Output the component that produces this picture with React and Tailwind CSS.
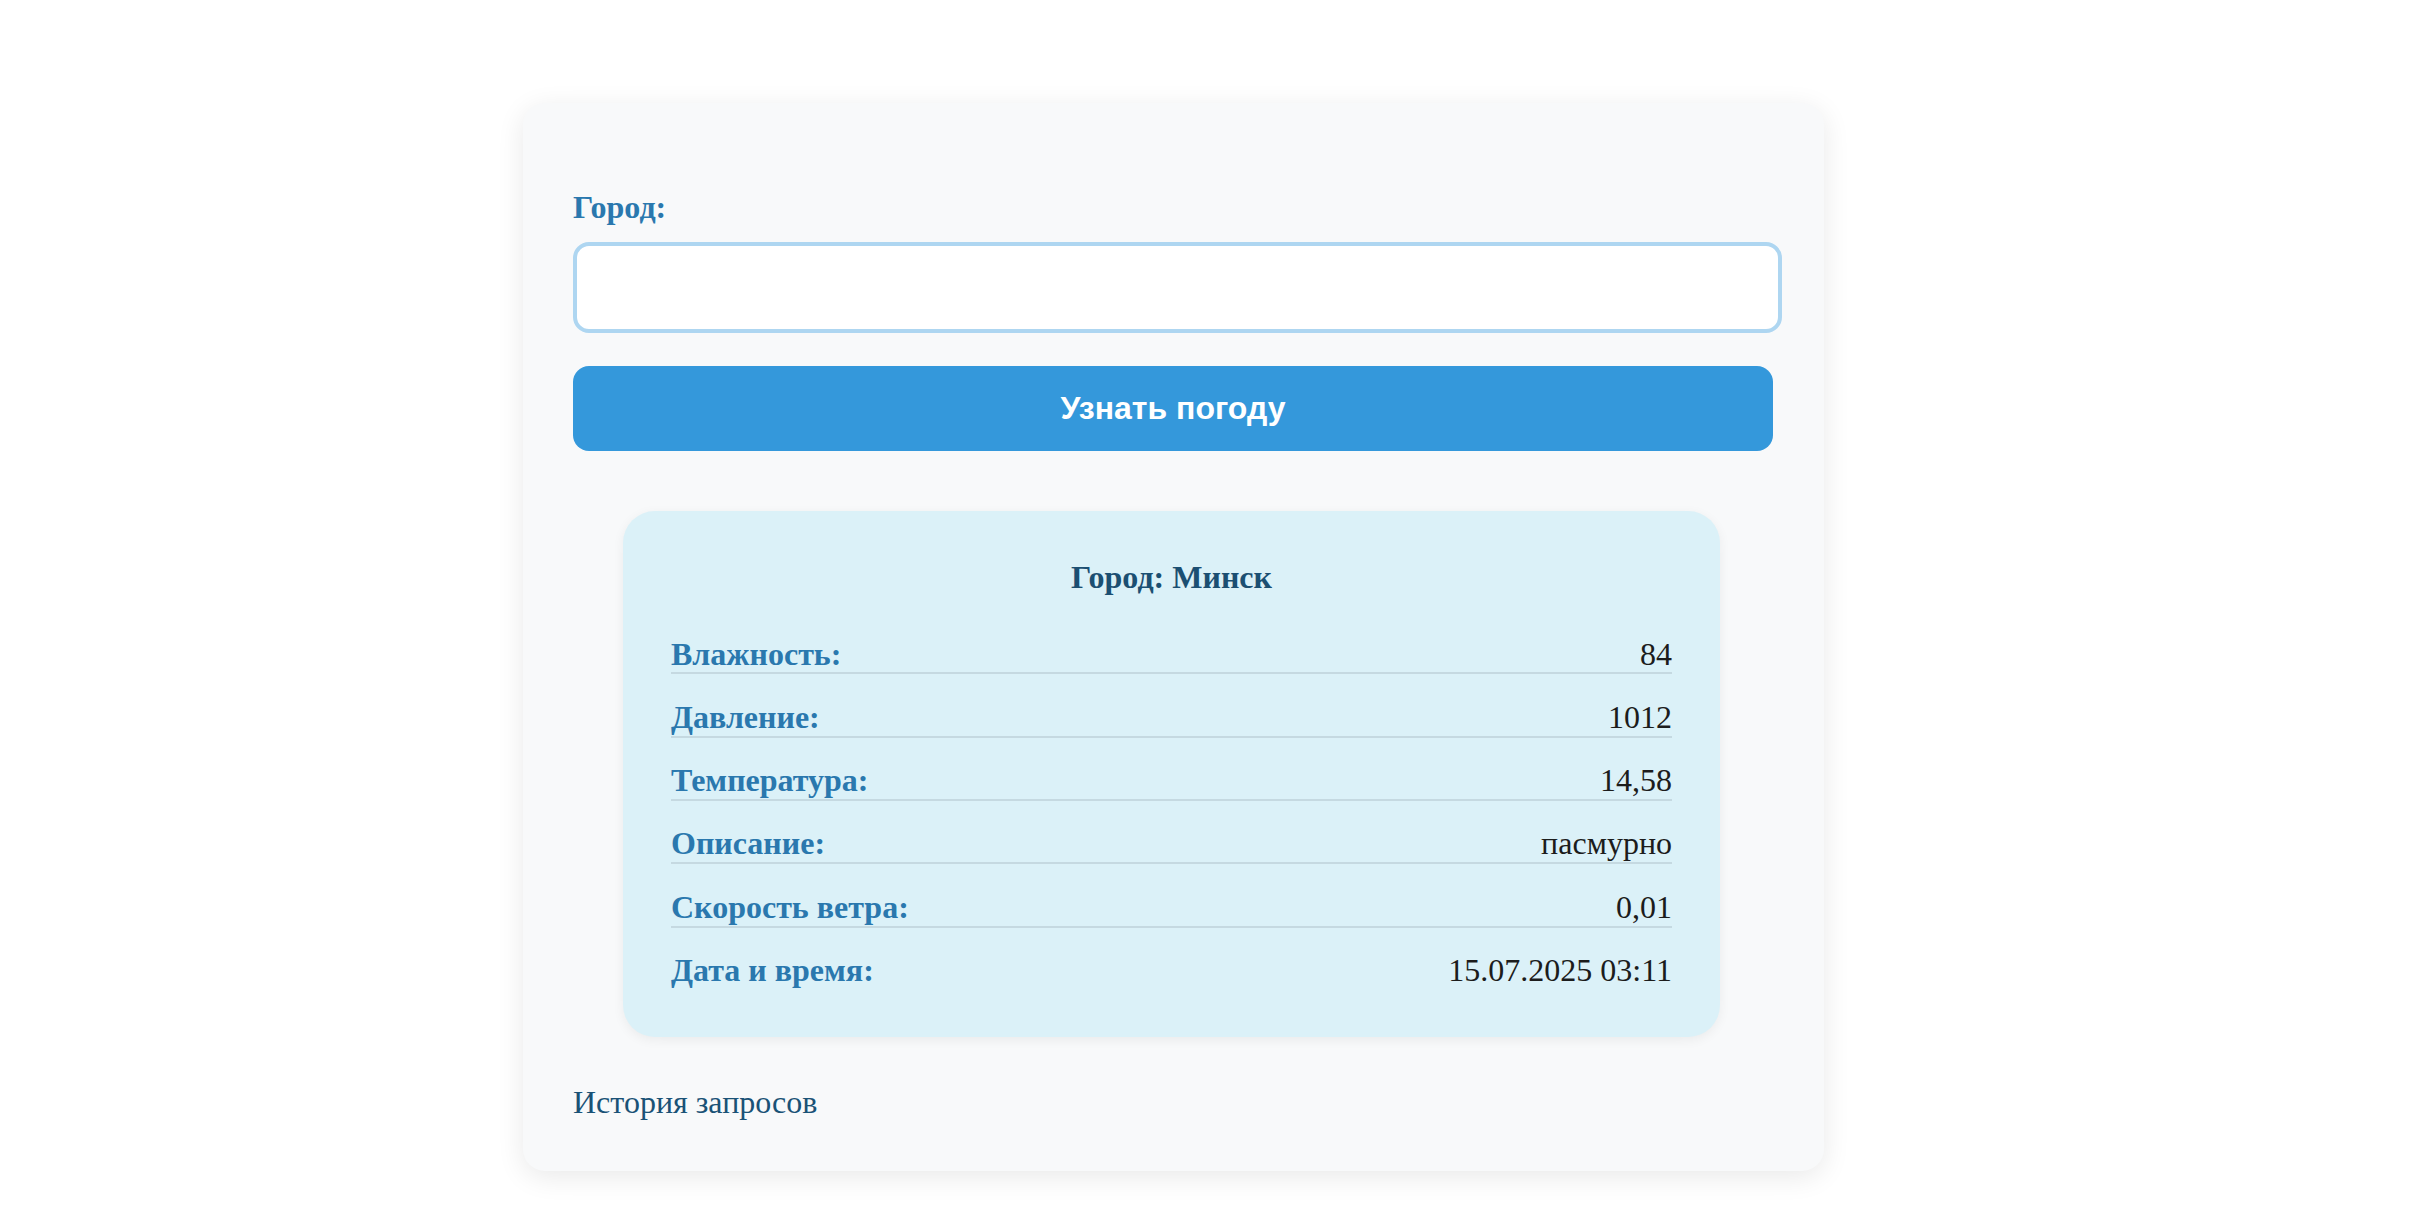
import React from "react";

const rows = [
  ["Влажность:", "84"],
  ["Давление:", "1012"],
  ["Температура:", "14,58"],
  ["Описание:", "пасмурно"],
  ["Скорость ветра:", "0,01"],
  ["Дата и время:", "15.07.2025 03:11"],
];

export default function App() {
  return (
    <div className="min-h-screen bg-white font-['Liberation_Serif',serif] pt-[103px]">
      <div className="ml-[523px] w-[1301px] rounded-[22px] bg-[#f8f9fa] shadow-[0_6px_28px_rgba(0,0,0,0.09)] px-[50px] pt-[86px] pb-[50px]">
        <label className="block text-[32px] font-bold leading-[1.15] text-[#2a78ae] mb-[16px]">
          Город:
        </label>
        <input
          type="text"
          className="block w-[1209px] h-[91px] rounded-[16px] border-[4px] border-[#aed6f1] bg-white outline-none"
        />
        <button className="mt-[33px] flex items-center justify-center w-[1200px] h-[85px] rounded-[16px] bg-[#3498db] text-white text-[32px] font-bold font-['Liberation_Sans',Arial,sans-serif]">
          Узнать погоду
        </button>

        <div className="mt-[60px] ml-[50px] w-[1097px] rounded-[32px] bg-[#dbf1f8] shadow-[0_3px_12px_rgba(0,0,0,0.06)] px-[48px] pt-[48px] pb-[48px]">
          <h3 className="text-center text-[32px] font-bold leading-[1.15] text-[#1b4f72] mb-[40px]">
            Город: Минск
          </h3>
          {rows.map(([label, value], idx) => (
            <div
              key={label}
              className={`flex justify-between text-[32px] leading-[1.15] ${
                idx < rows.length - 1
                  ? "border-b-2 border-[#c5d9e1] mb-[24.5px]"
                  : ""
              }`}
            >
              <span className="font-bold text-[#2a78ae]">{label}</span>
              <span className="text-[#1c1c1c]">{value}</span>
            </div>
          ))}
        </div>

        <div className="mt-[47px] text-[32px] leading-[1.15] text-[#1a5276]">
          История запросов
        </div>
      </div>
    </div>
  );
}
